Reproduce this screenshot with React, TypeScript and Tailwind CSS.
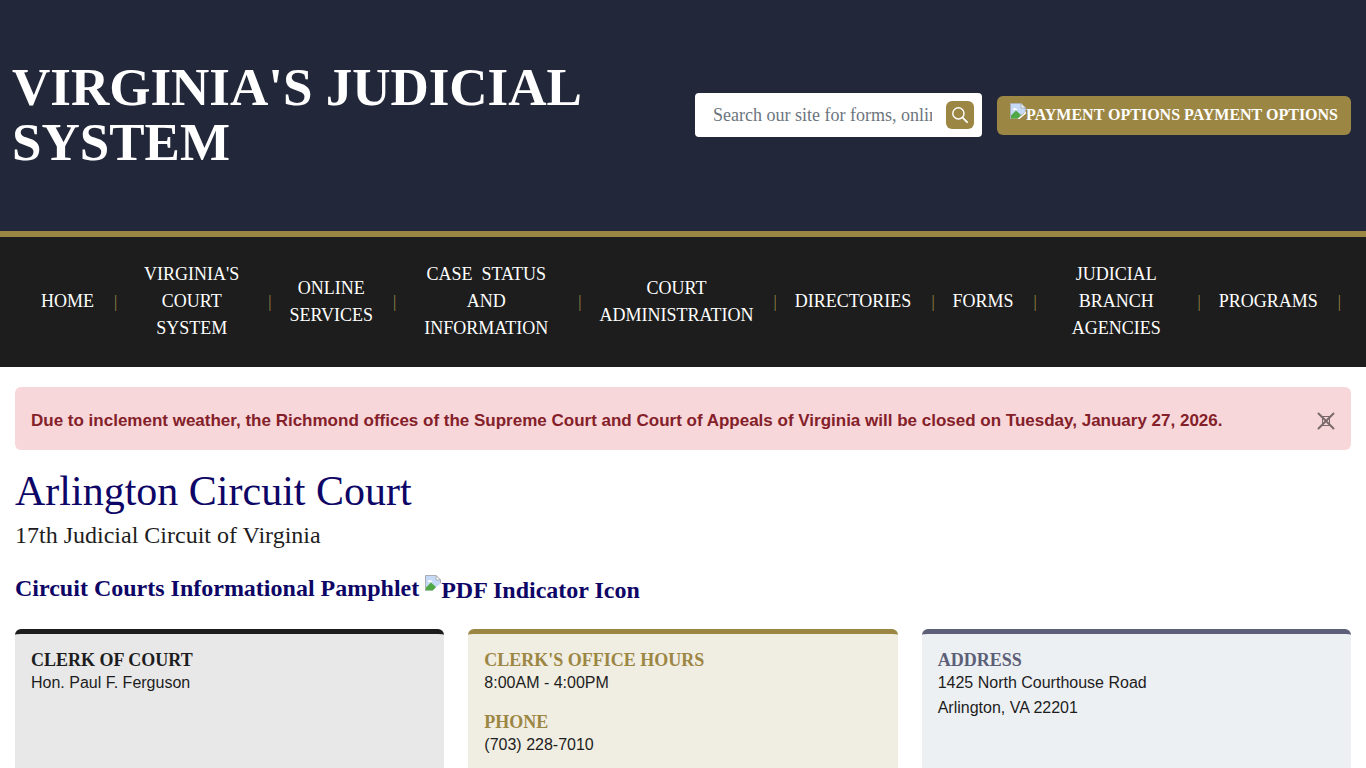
import React from 'react';

interface NavItem {
  label: string;
  href: string;
}

interface InfoBlock {
  title: string;
  lines: string[];
}

interface InfoCard {
  cardClass: string;
  titleClass: string;
  blocks: InfoBlock[];
}

const navItems: NavItem[] = [
  { label: 'Home', href: '#home' },
  { label: "Virginia's Court System", href: '#courts' },
  { label: 'Online Services', href: '#online' },
  { label: 'Case\u00a0 Status and Information', href: '#cases' },
  { label: 'Court Administration', href: '#administration' },
  { label: 'Directories', href: '#directories' },
  { label: 'Forms', href: '#forms' },
  { label: 'Judicial Branch Agencies', href: '#agencies' },
  { label: 'Programs', href: '#programs' }
];

const cards: InfoCard[] = [
  {
    cardClass: 'border-[#1d1d1d] bg-[#e8e8e8]',
    titleClass: 'text-[#1d1d1d]',
    blocks: [{ title: 'Clerk of Court', lines: ['Hon. Paul F. Ferguson'] }]
  },
  {
    cardClass: 'border-[#9c8644] bg-[#f0ede2]',
    titleClass: 'text-[#9c8644]',
    blocks: [
      { title: "Clerk's Office Hours", lines: ['8:00AM - 4:00PM'] },
      { title: 'Phone', lines: ['(703) 228-7010'] }
    ]
  },
  {
    cardClass: 'border-[#5c5f77] bg-[#edf0f3]',
    titleClass: 'text-[#5c5f77]',
    blocks: [{ title: 'Address', lines: ['1425 North Courthouse Road', 'Arlington, VA 22201'] }]
  }
];

// Placeholder drawn where an image is missing
const MissingImage: React.FC = () => (
  <svg viewBox="0 0 16 16" className="w-4 h-4 shrink-0" aria-hidden="true">
    <path d="M0.5 0.5H11L15.5 5V9L11 12L8 15.5H0.5Z" fill="#c6d9f7" />
    <path d="M0.5 15.5V13L6 7.5L11 12L8 15.5Z" fill="#4fa845" />
    <path d="M3 6.5C3 5 5 4.6 5.5 5.6C7 5.2 7.5 6.5 7 7H3Z" fill="#fff" />
    <path d="M16 8.5L7.5 16H9.5L16 10.5Z" fill="#fff" />
    <path d="M0.5 16V0.5H11L15.5 5V8" fill="none" stroke="#a9adb5" />
    <path d="M11 0.5V5H15.5Z" fill="#fff" stroke="#a9adb5" />
  </svg>
);

const Header: React.FC = () => (
  <header className="min-h-[237px] border-b-[6px] border-[#9c8644] bg-[#22283a] pl-3 pr-[15px] pb-px flex items-center">
    <h1 className="w-1/2 font-bold text-[53px] leading-[55px] text-white uppercase">Virginia's Judicial System</h1>
    <div className="flex-1 flex items-center justify-end gap-[15px]">
      <form
        className="flex-1 max-w-[287px] h-11 rounded bg-white pl-[18px] pr-2 flex items-center gap-3.5"
        onSubmit={e => e.preventDefault()}
      >
        <input
          type="text"
          aria-label="Search our site"
          placeholder="Search our site for forms, online services"
          className="flex-1 min-w-0 text-lg text-gray-800 placeholder:text-[#6c757d] outline-none"
        />
        <button type="submit" aria-label="Search" className="w-7 h-7 rounded-md bg-[#9c8644] flex items-center justify-center">
          <svg viewBox="0 0 16 16" className="w-4 h-4" fill="none" stroke="#fff" strokeLinecap="round" aria-hidden="true">
            <circle cx="6.4" cy="6.4" r="5.6" strokeWidth="1.4" />
            <path d="M10.6 10.6L15.1 15.1" strokeWidth="1.7" />
          </svg>
        </button>
      </form>
      <a
        href="#payment"
        className="h-[39px] rounded-md bg-[#9c8644] px-[13px] flex items-center gap-1 whitespace-nowrap font-bold text-base text-white uppercase"
      >
        <span className="flex items-start">
          <MissingImage />
          <span>Payment Options</span>
        </span>
        <span>Payment Options</span>
      </a>
    </div>
  </header>
);

const MainNav: React.FC = () => (
  <nav className="bg-[#1d1d1d] pl-[23px] pr-[25px]">
    <ul className="min-h-[130px] pb-px flex items-center">
      {navItems.map(item => (
        <li key={item.label} className="flex items-center">
          <a href={item.href} className="pl-[18px] pr-5 text-center text-lg leading-[27px] text-white uppercase">
            {item.label}
          </a>
          <span className="text-base text-[#9c8644]" aria-hidden="true">|</span>
        </li>
      ))}
    </ul>
  </nav>
);

const WeatherAlert: React.FC = () => (
  <div
    role="alert"
    className="min-h-[63px] rounded-md bg-[#f8d7da] px-4 pt-1 flex items-center justify-between font-['Liberation_Sans',sans-serif]"
  >
    <p className="font-bold text-[17px] leading-6 text-[#842029]">
      Due to inclement weather, the Richmond offices of the Supreme Court and Court of Appeals of Virginia will be closed on
      Tuesday, January 27, 2026.
    </p>
    <button type="button" aria-label="Close" className="opacity-50">
      <svg viewBox="0 0 18 18" className="w-[18px] h-[18px]" fill="none" stroke="#000" aria-hidden="true">
        <path d="M1.5 1.5L16.5 16.5M16.5 1.5L1.5 16.5" strokeWidth="2" strokeLinecap="round" />
        <path d="M4.5 4.5H13.5M4.5 13.5H13.5M5.5 4.5V13.5M12.5 4.5V13.5" />
      </svg>
    </button>
  </div>
);

export default function App() {
  return (
    <div className="min-h-screen bg-white text-[#1d1d1d] font-['Liberation_Serif',serif]">
      <Header />
      <MainNav />

      <main className="px-[15px] py-5">
        <WeatherAlert />

        <h2 className="mt-4 text-[42px] leading-[51px] text-[#0e0666]">Arlington Circuit Court</h2>
        <p className="mt-0.5 text-2xl leading-8">17th Judicial Circuit of Virginia</p>

        <h3 className="mt-5 font-bold text-2xl leading-[30px] text-[#0e0666]">
          <a href="#pamphlet" className="flex items-center gap-1.5">
            <span>Circuit Courts Informational Pamphlet</span>
            <span className="flex items-start pt-1">
              <MissingImage />
              <span>PDF Indicator Icon</span>
            </span>
          </a>
        </h3>

        {/* Court details */}
        <div className="mt-6 grid grid-cols-3 gap-6">
          {cards.map((card, idx) => (
            <section key={idx} className={`rounded-md border-t-[5px] px-4 pt-4 pb-6 space-y-[17px] ${card.cardClass}`}>
              {card.blocks.map(block => (
                <div key={block.title}>
                  <h4 className={`font-bold text-lg leading-5 uppercase ${card.titleClass}`}>{block.title}</h4>
                  {block.lines.map(line => (
                    <p key={line} className="text-base leading-[25px] font-['Liberation_Sans',sans-serif]">
                      {line}
                    </p>
                  ))}
                </div>
              ))}
            </section>
          ))}
        </div>
      </main>
    </div>
  );
}
